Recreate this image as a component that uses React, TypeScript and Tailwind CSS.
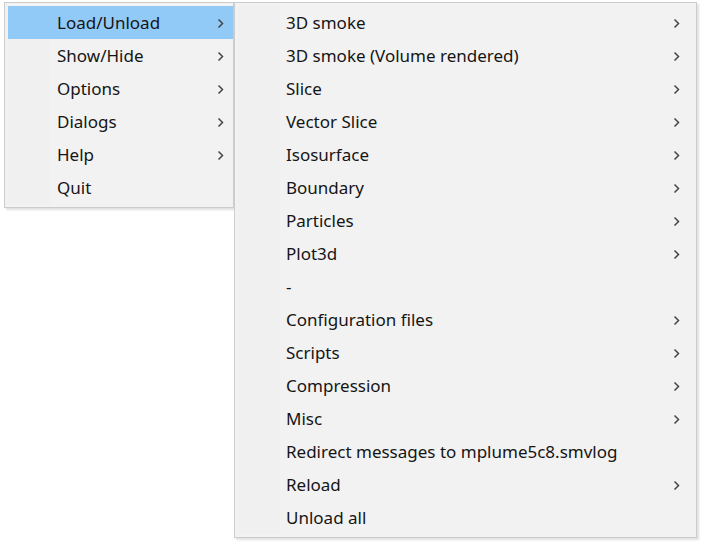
const mainItems = [
  { label: "Load/Unload", sub: true, active: true },
  { label: "Show/Hide", sub: true },
  { label: "Options", sub: true },
  { label: "Dialogs", sub: true },
  { label: "Help", sub: true },
  { label: "Quit", sub: false },
];

const loadItems = [
  { label: "3D smoke", sub: true },
  { label: "3D smoke (Volume rendered)", sub: true },
  { label: "Slice", sub: true },
  { label: "Vector Slice", sub: true },
  { label: "Isosurface", sub: true },
  { label: "Boundary", sub: true },
  { label: "Particles", sub: true },
  { label: "Plot3d", sub: true },
  { label: "-", sub: false },
  { label: "Configuration files", sub: true },
  { label: "Scripts", sub: true },
  { label: "Compression", sub: true },
  { label: "Misc", sub: true },
  { label: "Redirect messages to mplume5c8.smvlog", sub: false },
  { label: "Reload", sub: true },
  { label: "Unload all", sub: false },
];

const Arrow = () => (
  <svg width="7" height="11" viewBox="0 0 7 11" className="shrink-0 mt-[2px]">
    <path d="M1.5 1.5 L5.5 5.5 L1.5 9.5" fill="none" stroke="#444" strokeWidth="1.5" />
  </svg>
);

const App = () => {
  return (
    <div
      className="w-[702px] h-[547px] bg-white flex items-start pt-[2px] pl-[4px] text-[17px] text-[#151515]"
      style={{ fontFamily: '"Noto Sans", "Open Sans", sans-serif' }}
    >
      {/* main menu */}
      <div className="relative w-[230px] border border-[#cccccc] bg-[#f2f2f2] py-[3px] pl-[3px] shadow-[2px_2px_2px_rgba(0,0,0,0.12)]">
        <div className="absolute left-[3px] top-[3px] bottom-[3px] w-[42px] bg-[#f0f0f0]" />
        <ul className="relative">
          {mainItems.map((item) => (
            <li
              key={item.label}
              className={`h-[33px] flex items-center justify-between pl-[49px] pr-[9px] ${
                item.active ? "bg-[#91c9f7]" : ""
              }`}
            >
              <span className="leading-none">{item.label}</span>
              {item.sub && <Arrow />}
            </li>
          ))}
        </ul>
      </div>

      {/* Load/Unload submenu */}
      <div className="relative w-[463px] border border-[#cccccc] bg-[#f2f2f2] p-[3px] shadow-[2px_2px_2px_rgba(0,0,0,0.12)]">
        <div className="absolute left-[3px] top-[3px] bottom-[3px] w-[42px] bg-[#f0f0f0]" />
        <ul className="relative">
          {loadItems.map((item) => (
            <li
              key={item.label}
              className="h-[33px] flex items-center justify-between pl-[48px] pr-[13px]"
            >
              <span className="leading-none">{item.label}</span>
              {item.sub && <Arrow />}
            </li>
          ))}
        </ul>
      </div>
    </div>
  );
};

export default App;
